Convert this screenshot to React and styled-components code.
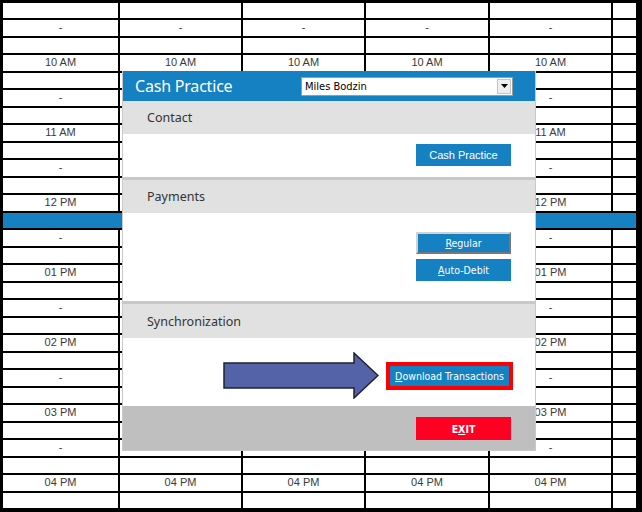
import React from "react"
import styled, { createGlobalStyle } from "styled-components"

const BLUE = "#1580c2"

const GlobalStyle = createGlobalStyle`
    html, body {
        margin: 0;
        padding: 0;
        background: #000;
    }
    body {
        font-family: "Liberation Sans", Arial, sans-serif;
    }
`

const Page = styled.div`
    position: relative;
    width: 642px;
    height: 512px;
    box-sizing: border-box;
    padding: 3px 6px 4px 3px;
    background: #000;
    overflow: hidden;
`
const Sheet = styled.div`
    display: flex;
    flex-direction: column;
    gap: 2px;
`
const Row = styled.div`
    display: grid;
    grid-template-columns: 115px 121px 121px 122px 121px 23px;
    column-gap: 2px;
    height: 15.5px;
    background: ${p => (p.$active ? BLUE : "#000")};
    &:first-child {
        height: 15px;
    }
`
const Cell = styled.div`
    display: flex;
    align-items: center;
    justify-content: center;
    background: ${p => (p.$active ? "transparent" : "#fff")};
    color: #3a3a3a;
    font-size: 11px;
    line-height: 1;
`

const Dialog = styled.div`
    position: absolute;
    left: 122px;
    top: 71px;
    width: 414px;
    height: 380px;
    box-sizing: border-box;
    border: 1px solid #c9c9c9;
    border-top: none;
    background: #fff;
    display: flex;
    flex-direction: column;
    font-family: "Noto Sans", "Open Sans", sans-serif;
`
const Header = styled.div`
    height: 30px;
    flex: none;
    background: ${BLUE};
    display: flex;
    align-items: center;
    justify-content: space-between;
    padding: 0 22px 0 12px;
`
const Title = styled.div`
    color: #fff;
    font-size: 16px;
    letter-spacing: -0.2px;
`
const Picker = styled.div`
    width: 212px;
    height: 19px;
    box-sizing: border-box;
    background: #fff;
    border: 1px solid #9a9a9a;
    display: flex;
    align-items: center;
    justify-content: space-between;
    padding: 0 1px 0 3px;
    font: 11px "DejaVu Sans Condensed", "DejaVu Sans", sans-serif;
    color: #000;
`
const PickerArrow = styled.span`
    width: 14px;
    height: 15px;
    box-sizing: border-box;
    border: 1px solid #c4c4c4;
    background: #efefef;
    display: flex;
    align-items: center;
    justify-content: center;
`
const Band = styled.div`
    height: ${p => p.$h}px;
    flex: none;
    box-sizing: border-box;
    background: #e1e1e1;
    border-top: ${p => (p.$rule ? "3px solid #c8c8c8" : "none")};
    padding-left: 24px;
    display: flex;
    align-items: center;
    font-size: 12.5px;
    color: #333;
`
const Body = styled.div`
    height: ${p => p.$h}px;
    flex: none;
    box-sizing: border-box;
    padding: ${p => p.$top}px ${p => p.$right ?? 24}px 0 0;
    display: flex;
    flex-direction: column;
    align-items: flex-end;
    gap: 5px;
`
const Footer = styled.div`
    flex: 1;
    background: #bfbfbf;
    padding: 11px 24px 0 0;
    display: flex;
    justify-content: flex-end;
    align-items: flex-start;
`
const ActionRow = styled.div`
    display: flex;
    align-items: center;
    gap: 7px;
`
const Frame = styled.div`
    display: flex;
    border: 4px solid #ff0000;
`
const ActionButton = styled.button`
    width: ${p => p.$w || 95}px;
    height: ${p => p.$h || 22}px;
    box-sizing: border-box;
    border: ${p => (p.$raised ? "2px solid" : "none")};
    border-color: #d2d2d2 #777 #777 #d2d2d2;
    background: ${p => (p.$tone === "red" ? "#fe0022" : BLUE)};
    color: #fff;
    font-family: ${p =>
        p.$plain ? '"Liberation Sans", Arial' : '"DejaVu Sans Condensed", "DejaVu Sans"'}, sans-serif;
    font-size: ${p => (p.$plain ? 11 : 10.5)}px;
    font-weight: ${p => (p.$bold ? 700 : 400)};
    padding: 0;
    cursor: pointer;
`

const LABELS = ["", "-", "", "10 AM", "", "-", "", "11 AM", "", "-", "", "12 PM", "", "-", "", "01 PM",
    "", "-", "", "02 PM", "", "-", "", "03 PM", "", "-", "", "04 PM", ""]
const ACTIVE_ROW = 12
const COLUMNS = 5

const Pointer = () => (
    <svg width="156" height="47" viewBox="0 0 156 47">
        <polygon
            points="1,11 131,11 131,1 155,23.5 131,46 131,36 1,36"
            fill="#5462a8"
            stroke="#1f2230"
            strokeWidth="1.5"
            strokeLinejoin="miter"
        />
    </svg>
)

const App = () => {
    return (
        <Page>
            <GlobalStyle />
            <Sheet>
                {LABELS.map((label, i) => {
                    const active = i === ACTIVE_ROW
                    return (
                        <Row key={i} $active={active}>
                            {Array.from({ length: COLUMNS }).map((_, c) => (
                                <Cell key={c} $active={active}>{label}</Cell>
                            ))}
                            <Cell $active={active} />
                        </Row>
                    )
                })}
            </Sheet>

            <Dialog>
                <Header>
                    <Title>Cash Practice</Title>
                    <Picker>
                        <span>Miles Bodzin</span>
                        <PickerArrow>
                            <svg width="7" height="4" viewBox="0 0 7 4">
                                <polygon points="0,0 7,0 3.5,4" fill="#000" />
                            </svg>
                        </PickerArrow>
                    </Picker>
                </Header>

                <Band $h={33}>Contact</Band>
                <Body $h={43} $top={10}>
                    <ActionButton $plain>Cash Practice</ActionButton>
                </Body>

                <Band $h={36} $rule>Payments</Band>
                <Body $h={88} $top={19}>
                    <ActionButton $raised><u>R</u>egular</ActionButton>
                    <ActionButton><u>A</u>uto-Debit</ActionButton>
                </Body>

                <Band $h={37} $rule>Synchronization</Band>
                <Body $h={68} $top={14} $right={22}>
                    <ActionRow>
                        <Pointer />
                        <Frame>
                            <ActionButton $w={119} $h={20}><u>D</u>ownload Transactions</ActionButton>
                        </Frame>
                    </ActionRow>
                </Body>

                <Footer>
                    <ActionButton $tone="red" $h={23} $bold>E<u>X</u>IT</ActionButton>
                </Footer>
            </Dialog>
        </Page>
    )
}
export default App
